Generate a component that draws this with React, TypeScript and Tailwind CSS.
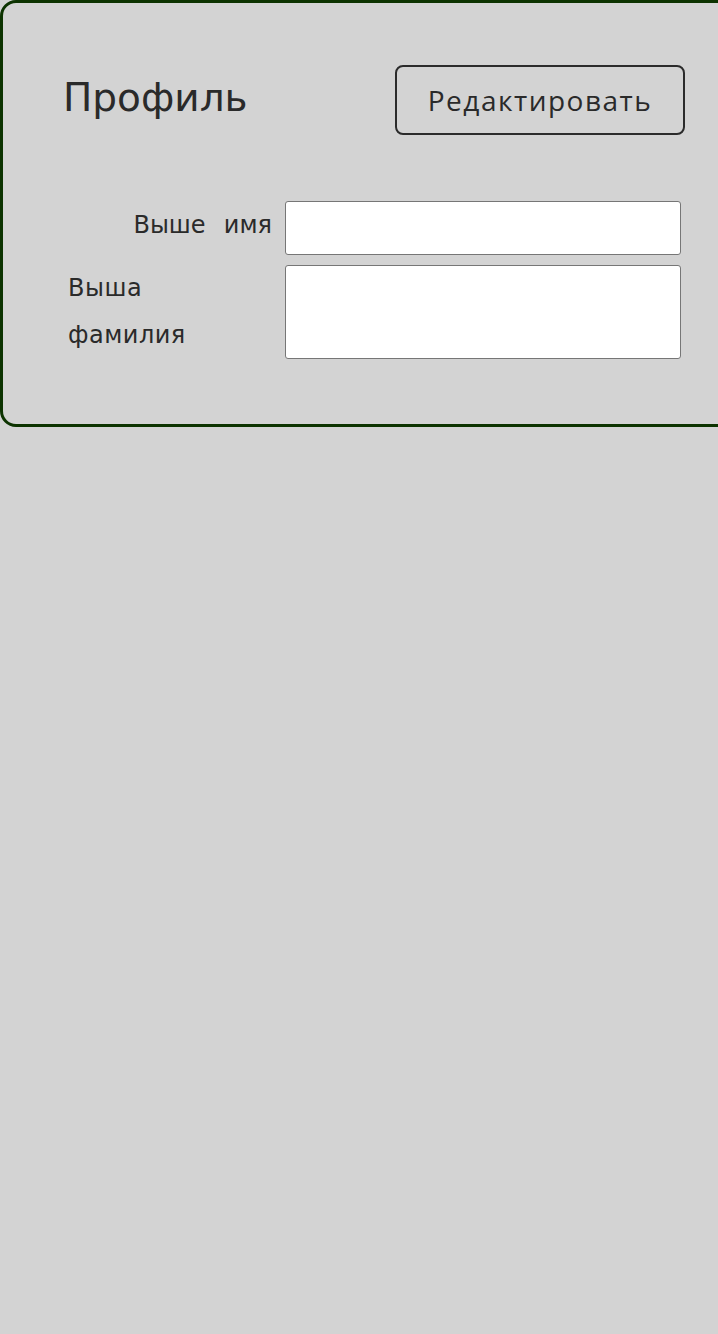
import React from "react"

const App: React.FC = () => {
    return (
        <div className="min-h-[1334px] w-full overflow-hidden bg-[#d3d3d3] text-[#2a2a2a] font-['DejaVu_Sans',sans-serif]">
            <div className="w-[760px] border-[3px] border-[#0c3300] rounded-[16px] pt-[62px] pb-[65px] pl-[60px]">
                <div className="flex items-center justify-between w-[622px]">
                    <h1 className="text-[39px] leading-none pb-[6px]">Профиль</h1>
                    <button className="w-[290px] h-[70px] border-2 border-[#2b2b2b] rounded-[8px] text-[28px] tracking-[1.5px] font-['Open_Sans',sans-serif]">
                        Редактировать
                    </button>
                </div>
                <div className="mt-[66px] flex flex-col gap-[10px]">
                    <div className="flex items-center">
                        <label className="w-[222px] pr-[13px] pb-[6px] text-right text-[24px] whitespace-pre [word-spacing:1.5px]">Выше  имя</label>
                        <input className="w-[396px] h-[54px] bg-white border border-[#767676] rounded-[3px]" />
                    </div>
                    <div className="flex items-start">
                        <label className="w-[222px] pl-[5px] pr-[90px] text-[24px] leading-[47px] tracking-[0.5px]">Выша фамилия</label>
                        <textarea className="w-[396px] h-[94px] bg-white border border-[#767676] rounded-[3px] resize-none" />
                    </div>
                </div>
            </div>
        </div>
    )
}

export default App
